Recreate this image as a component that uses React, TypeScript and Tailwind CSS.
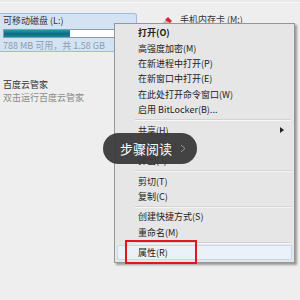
import React from "react";

type Item = { t: string; bold?: boolean; arrow?: boolean; hot?: boolean };

const groups: Item[][] = [
  [
    { t: "打开(O)", bold: true },
    { t: "高强度加密(M)" },
    { t: "在新进程中打开(P)" },
    { t: "在新窗口中打开(E)" },
    { t: "在此处打开命令窗口(W)" },
    { t: "启用 BitLocker(B)..." },
  ],
  [{ t: "共享(H)", arrow: true }, { t: "格式化(A)..." }, { t: "弹出(J)" }],
  [{ t: "剪切(T)" }, { t: "复制(C)" }],
  [{ t: "创建快捷方式(S)" }, { t: "重命名(M)" }],
  [{ t: "属性(R)", hot: true }],
];

const MenuRow = ({ item }: { item: Item }) => {
  if (item.hot) {
    // 属性 row: hovered look plus the red marker box
    return (
      <div className="relative mx-[2px] h-[15.4px] flex items-center pl-[20px] border border-[#c6d9ee] bg-[#eaf1f9] rounded-[2px]">
        <span className="text-[9px] leading-none text-[#222]">{item.t}</span>
        <div className="absolute left-[7px] top-[-6px] w-[72px] h-[24px] border-2 border-[#e3151f]" />
      </div>
    );
  }
  return (
    <div className="h-[15.4px] flex items-center pl-[23px] pr-[10px]">
      <span className={`text-[9px] leading-none text-[#222] ${item.bold ? "font-bold" : ""}`}>{item.t}</span>
      {item.arrow && (
        <span className="ml-auto w-0 h-0 border-y-[3px] border-y-transparent border-l-[4px] border-l-[#222]" />
      )}
    </div>
  );
};

const Separator = () => (
  <div className="h-[5px] flex flex-col justify-center ml-[20px] mr-[3px]">
    <div className="h-px bg-[#d2d2d2]" />
    <div className="h-px bg-[#f6f6f6]" />
  </div>
);

export default function App() {
  return (
    <div className="relative w-[300px] h-[300px] overflow-hidden bg-[#eeeeee] font-['Noto_Sans_CJK_SC','Noto_Sans',sans-serif]">
      <div className="h-[3px] border-b border-[#f8f8f8] bg-[#e9e9e9]" />

      {/* drives row */}
      <div className="flex mt-[10px]">
        <div className="w-[137px] h-[39px] rounded-r-[3px] border border-l-0 border-[#9dbbe0] bg-[#d3e3f4] pl-[3px] pt-[1px]">
          <div className="text-[9px] leading-[11px] text-[#333]">可移动磁盘 (L:)</div>
          <div className="mt-[3px] h-[9px] w-[140px] border border-[#8a9aa6] bg-white">
            <div className="h-full w-[66px] bg-[linear-gradient(#2a98b4,#11677f_55%,#1b86a4)]" />
          </div>
          <div className="mt-[2px] text-[9px] leading-[11px] text-[#8c9db0]">788 MB 可用，共 1.58 GB</div>
        </div>
        <div className="ml-[20px] flex items-start">
          <svg width="16" height="12" viewBox="0 0 16 12" className="mt-[3px]">
            <path d="M2 10 L9 4 L14 8 L7 12 Z" fill="#bcbcbc" />
            <path d="M8 4 L11 1 L15 5 L13 7 Z" fill="#d6262d" />
          </svg>
          <span className="ml-[7px] text-[9px] leading-[11px] text-[#333] mt-[1px]">手机内存卡 (M:)</span>
        </div>
      </div>

      {/* left program entry */}
      <div className="mt-[27px] pl-[3px]">
        <div className="text-[9px] leading-[12px] text-[#333]">百度云管家</div>
        <div className="mt-[1px] text-[9px] leading-[12px] text-[#8a8a8a]">双击运行百度云管家</div>
      </div>

      {/* context menu */}
      <div className="absolute left-[114px] top-[23px] w-[181px] pt-[1px] pb-[2px] border border-[#969696] bg-[#e6e6e6] shadow-[2px_2px_2px_rgba(0,0,0,0.35)]">
        {groups.map((g, gi) => (
          <React.Fragment key={gi}>
            {gi > 0 && <Separator />}
            {g.map((it) => (
              <MenuRow key={it.t} item={it} />
            ))}
          </React.Fragment>
        ))}
      </div>

      {/* step reading pill */}
      <div className="absolute left-[103px] top-[133px] w-[94px] h-[31px] rounded-full bg-[#3a3a3a]/95 flex items-center pl-[17px]">
        <span className="text-[13px] leading-none text-white">步骤阅读</span>
        <svg width="6" height="9" viewBox="0 0 6 9" className="ml-[8px]">
          <path d="M1 1 L5 4.5 L1 8" fill="none" stroke="#9a9a9a" strokeWidth="1" />
        </svg>
      </div>
    </div>
  );
}
